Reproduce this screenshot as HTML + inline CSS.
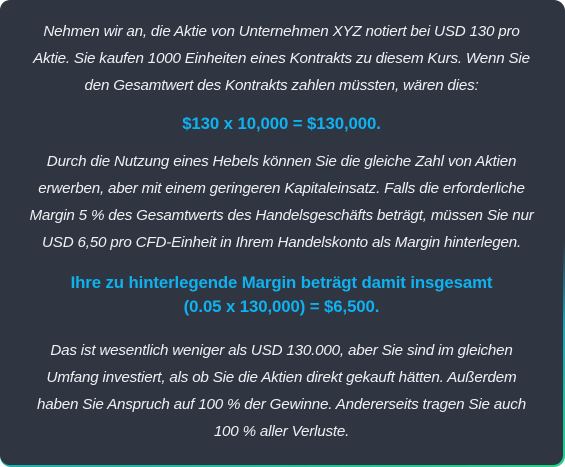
<!DOCTYPE html>
<html><head><meta charset="utf-8"><style>
html,body{margin:0;padding:0;background:#fff;}
.outer{width:565px;height:467px;box-sizing:border-box;border-radius:11px;padding:0 2px 2px 0;background:linear-gradient(170deg,#2f3541 60%,#1ea0b8 75%,#22d38a 100%);}
.inner{width:563px;height:465px;border-radius:10px;background:#2f3541;box-sizing:border-box;padding-top:18px;text-align:center;font-family:"Liberation Sans",sans-serif;color:#eef0f3;}
p{margin:0;font-style:italic;font-size:15.2px;line-height:27px;letter-spacing:-0.2px;white-space:nowrap;}
.b{font-style:normal;font-weight:bold;color:#0fb2f0;font-size:16.8px;letter-spacing:-0.1px;}
</style></head><body><div class="outer"><div class="inner">
<p>Nehmen wir an, die Aktie von Unternehmen XYZ notiert bei USD 130 pro<br>Aktie. Sie kaufen 1000 Einheiten eines Kontrakts zu diesem Kurs. Wenn Sie<br>den Gesamtwert des Kontrakts zahlen müssten, wären dies:</p>
<p class="b" style="margin-top:11px">$130 x 10,000 = $130,000.</p>
<p style="margin-top:11px">Durch die Nutzung eines Hebels können Sie die gleiche Zahl von Aktien<br>erwerben, aber mit einem geringeren Kapitaleinsatz. Falls die erforderliche<br>Margin 5 % des Gesamtwerts des Handelsgeschäfts beträgt, müssen Sie nur<br>USD 6,50 pro CFD-Einheit in Ihrem Handelskonto als Margin hinterlegen.</p>
<p class="b" style="margin-top:15px;line-height:24px">Ihre zu hinterlegende Margin beträgt damit insgesamt<br>(0.05 x 130,000) = $6,500.</p>
<p style="margin-top:18px">Das ist wesentlich weniger als USD 130.000, aber Sie sind im gleichen<br>Umfang investiert, als ob Sie die Aktien direkt gekauft hätten. Außerdem<br>haben Sie Anspruch auf 100 % der Gewinne. Andererseits tragen Sie auch<br>100 % aller Verluste.</p>
</div></div></body></html>
